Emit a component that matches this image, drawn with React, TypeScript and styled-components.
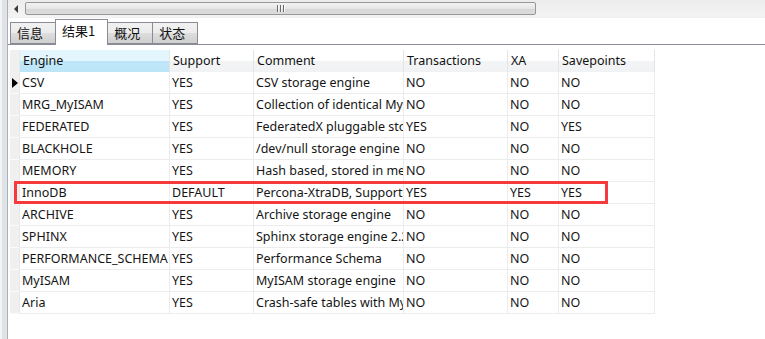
import React from 'react'
import styled, { createGlobalStyle } from 'styled-components'

const GlobalStyle = createGlobalStyle`
  html, body {
    margin: 0;
    padding: 0;
    background: #ffffff;
  }
  body {
    font-family: "Noto Sans", "Noto Sans CJK SC", sans-serif;
    font-size: 12.5px;
    color: #1a1a1a;
  }
`

type Row = {
  engine: string,
  support: string,
  comment: string,
  transactions: string,
  xa: string,
  savepoints: string
}

const rows: Row[] = [
  { engine: 'CSV', support: 'YES', comment: 'CSV storage engine', transactions: 'NO', xa: 'NO', savepoints: 'NO' },
  { engine: 'MRG_MyISAM', support: 'YES', comment: 'Collection of identical MyISAM tables', transactions: 'NO', xa: 'NO', savepoints: 'NO' },
  { engine: 'FEDERATED', support: 'YES', comment: 'FederatedX pluggable storage engine', transactions: 'YES', xa: 'NO', savepoints: 'YES' },
  { engine: 'BLACKHOLE', support: 'YES', comment: '/dev/null storage engine', transactions: 'NO', xa: 'NO', savepoints: 'NO' },
  { engine: 'MEMORY', support: 'YES', comment: 'Hash based, stored in memory', transactions: 'NO', xa: 'NO', savepoints: 'NO' },
  { engine: 'InnoDB', support: 'DEFAULT', comment: 'Percona-XtraDB, Supports transactions', transactions: 'YES', xa: 'YES', savepoints: 'YES' },
  { engine: 'ARCHIVE', support: 'YES', comment: 'Archive storage engine', transactions: 'NO', xa: 'NO', savepoints: 'NO' },
  { engine: 'SPHINX', support: 'YES', comment: 'Sphinx storage engine 2.2', transactions: 'NO', xa: 'NO', savepoints: 'NO' },
  { engine: 'PERFORMANCE_SCHEMA', support: 'YES', comment: 'Performance Schema', transactions: 'NO', xa: 'NO', savepoints: 'NO' },
  { engine: 'MyISAM', support: 'YES', comment: 'MyISAM storage engine', transactions: 'NO', xa: 'NO', savepoints: 'NO' },
  { engine: 'Aria', support: 'YES', comment: 'Crash-safe tables with MyISAM heritage', transactions: 'NO', xa: 'NO', savepoints: 'NO' },
]

const headers = ['Engine', 'Support', 'Comment', 'Transactions', 'XA', 'Savepoints']
const tabs = ['信息', '结果1', '概况', '状态']

// 列幅
const COLS = '10px 150px 84px 150px 104px 51px 96px'

const Page = styled.div`
  display: flex;
  width: 765px;
  height: 339px;
  overflow: hidden;
`

const LeftStrip = styled.div`
  width: 7px;
  flex: none;
  background: linear-gradient(to right, #f4f4f4 0, #f4f4f4 2px, #dfe3e8 2px);
  border-right: 1px solid #aab0b8;
`

const Main = styled.div`
  flex: 1;
  display: flex;
  flex-direction: column;
  min-width: 0;
`

const HScroll = styled.div`
  height: 17px;
  display: flex;
  align-items: center;
  background: linear-gradient(#ececec, #f4f4f4);
  border-bottom: 1px solid #f0f0f0;
  flex: none;
`

const ArrowBtn = styled.div`
  width: 17px;
  height: 17px;
  display: flex;
  align-items: center;
  justify-content: center;
  flex: none;
`

const LeftArrow = styled.div`
  width: 0;
  height: 0;
  border-top: 4px solid transparent;
  border-bottom: 4px solid transparent;
  border-right: 4px solid #3c3c3c;
  margin-left: -2px;
`

const Thumb = styled.div`
  width: 511px;
  height: 13px;
  box-sizing: border-box;
  border: 1px solid #979797;
  border-radius: 2px;
  background: linear-gradient(#f2f2f2, #e6e6e6 50%, #d6d6d6 51%, #dcdcdc);
  display: flex;
  align-items: center;
  justify-content: center;
`

const Grip = styled.div`
  display: flex;
  gap: 1px;
  span {
    width: 1px;
    height: 7px;
    background: #6a6a6a;
    border-right: 1px solid #f8f8f8;
  }
`

const TabBar = styled.div`
  height: 26px;
  display: flex;
  align-items: flex-end;
  padding-left: 2px;
  border-bottom: 1px solid #898c95;
  flex: none;
`

const Tab = styled.div<{ $active?: boolean }>`
  box-sizing: border-box;
  height: ${p => p.$active ? '26px' : '22px'};
  margin-bottom: ${p => p.$active ? '-1px' : '0'};
  padding: 0 ${p => p.$active ? '12px' : '6px'} ${p => p.$active ? '4px' : '1px'} 6px;
  min-width: 46px;
  border: 1px solid #898c95;
  border-bottom: ${p => p.$active ? 'none' : '1px solid #898c95'};
  margin-right: -1px;
  background: ${p => p.$active ? '#ffffff' : 'linear-gradient(#f2f2f2, #ebebeb 50%, #dddddd 51%, #cfcfcf)'};
  display: flex;
  align-items: center;
  font-family: "Noto Sans CJK SC", sans-serif;
  font-size: 13px;
  line-height: 16px;
  color: #111;
  z-index: ${p => p.$active ? 1 : 0};
`

const GridArea = styled.div`
  position: relative;
  margin-top: 5px;
  margin-left: 2px;
`

const GridRow = styled.div`
  display: grid;
  grid-template-columns: ${COLS};
  height: 22px;
`

const HeadCell = styled.div<{ $sorted?: boolean }>`
  box-sizing: border-box;
  height: 22px;
  padding: 0 3px 2px;
  display: flex;
  align-items: center;
  white-space: nowrap;
  overflow: hidden;
  border-right: 1px solid #e3e4e6;
  background: ${p => p.$sorted
    ? 'linear-gradient(#e3f5fd, #e3f5fd 50%, #bfe6f9 51%, #bde5f8)'
    : 'linear-gradient(#ffffff, #ffffff 50%, #f3f4f5 51%, #f1f2f4)'};
  color: #111;
`

const Indicator = styled.div<{ $head?: boolean }>`
  box-sizing: border-box;
  height: 22px;
  background: #f0f0f0;
  border-bottom: 1px solid ${p => p.$head ? '#f0f0f0' : '#fbfbfb'};
  border-right: 1px solid #e8e8e8;
  display: flex;
  align-items: center;
  justify-content: center;
`

const Pointer = styled.div`
  width: 0;
  height: 0;
  border-top: 5px solid transparent;
  border-bottom: 5px solid transparent;
  border-left: 6px solid #000;
  margin-left: 1px;
`

const Cell = styled.div`
  box-sizing: border-box;
  height: 22px;
  padding: 0 2px 1px;
  display: flex;
  align-items: center;
  white-space: nowrap;
  overflow: hidden;
  border-right: 1px solid #ececec;
  border-bottom: 1px solid #ececec;
  background: #ffffff;
  color: #151515;
`

const Highlight = styled.div`
  position: absolute;
  left: 4px;
  top: 131px;
  width: 594px;
  height: 23px;
  box-sizing: border-box;
  border: 3px solid #f5393c;
  pointer-events: none;
`

const App = () => {
  return (
    <>
      <GlobalStyle />
      <Page>
        <LeftStrip />
        <Main>
          <HScroll>
            <ArrowBtn><LeftArrow /></ArrowBtn>
            <Thumb>
              <Grip><span /><span /><span /></Grip>
            </Thumb>
          </HScroll>
          <TabBar>
            {tabs.map((t, i) => (
              <Tab key={t} $active={i === 1}>{t}</Tab>
            ))}
          </TabBar>
          <GridArea>
            <GridRow>
              <Indicator $head />
              {headers.map((h, i) => (
                <HeadCell key={h} $sorted={i === 0}>{h}</HeadCell>
              ))}
            </GridRow>
            {rows.map((r, i) => (
              <GridRow key={r.engine}>
                <Indicator>{i === 0 && <Pointer />}</Indicator>
                <Cell>{r.engine}</Cell>
                <Cell>{r.support}</Cell>
                <Cell>{r.comment}</Cell>
                <Cell>{r.transactions}</Cell>
                <Cell>{r.xa}</Cell>
                <Cell>{r.savepoints}</Cell>
              </GridRow>
            ))}
            <Highlight />
          </GridArea>
        </Main>
      </Page>
    </>
  )
}

export default App
